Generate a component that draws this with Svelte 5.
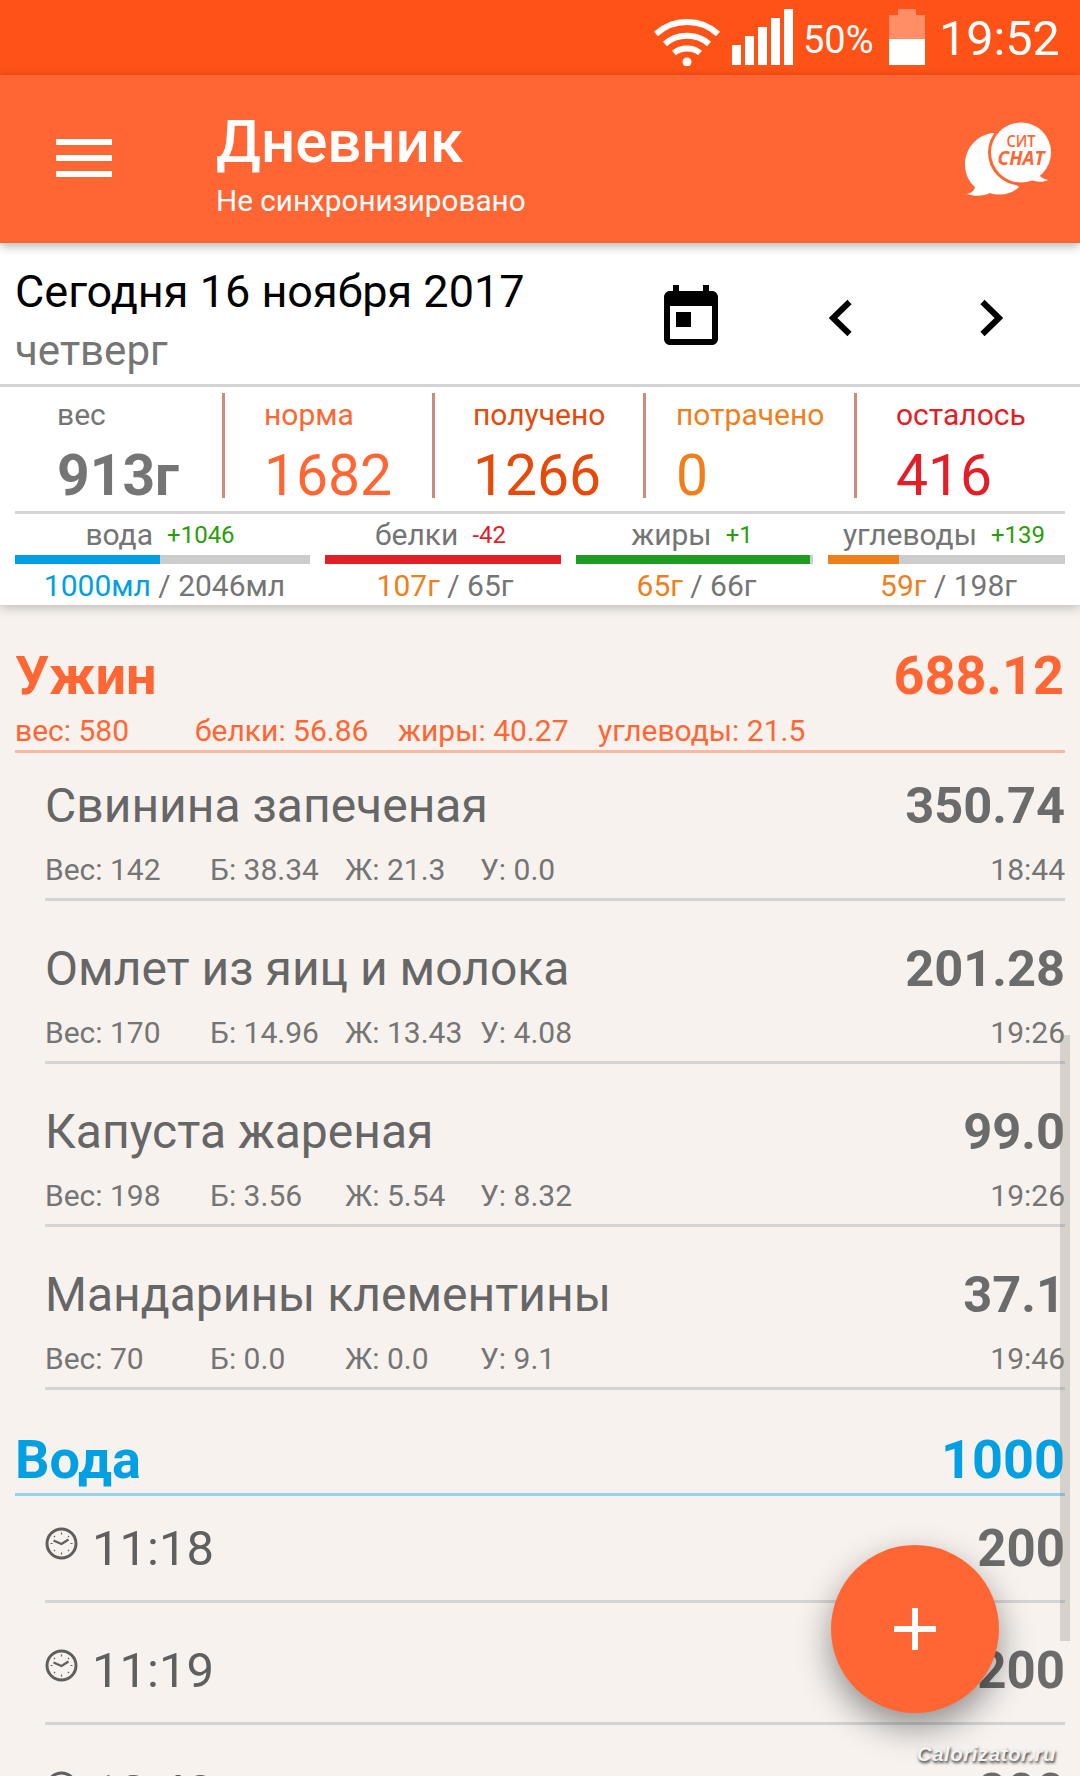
<script>
  const stats = [
    { label: 'вес', value: '913г', cls: 'gray bold', w: 225, pad: 57 },
    { label: 'норма', value: '1682', cls: 'c-norm', w: 210, pad: 39 },
    { label: 'получено', value: '1266', cls: 'c-got', w: 211, pad: 38 },
    { label: 'потрачено', value: '0', cls: 'c-spent', w: 211, pad: 30 },
    { label: 'осталось', value: '416', cls: 'c-left', w: 223, pad: 39 }
  ];
  const macros = [
    { name: 'вода', diff: '+1046', diffCls: 'plus', w: 295, pct: 49.2, color: '#009fe3', val: '1000мл', valCls: 'c-water', total: ' / 2046мл' },
    { name: 'белки', diff: '-42', diffCls: 'minus', w: 236, pct: 100, color: '#e31e24', val: '107г', valCls: 'c-spent', total: ' / 65г' },
    { name: 'жиры', diff: '+1', diffCls: 'plus', w: 237, pct: 98.7, color: '#1f9d23', val: '65г', valCls: 'c-spent', total: ' / 66г' },
    { name: 'углеводы', diff: '+139', diffCls: 'plus', w: 237, pct: 30, color: '#ef7f1a', val: '59г', valCls: 'c-spent', total: ' / 198г' }
  ];
  const foods = [
    { name: 'Свинина запеченая', kcal: '350.74', w: '142', p: '38.34', f: '21.3', c: '0.0', t: '18:44' },
    { name: 'Омлет из яиц и молока', kcal: '201.28', w: '170', p: '14.96', f: '13.43', c: '4.08', t: '19:26' },
    { name: 'Капуста жареная', kcal: '99.0', w: '198', p: '3.56', f: '5.54', c: '8.32', t: '19:26' },
    { name: 'Мандарины клементины', kcal: '37.1', w: '70', p: '0.0', f: '0.0', c: '9.1', t: '19:46' }
  ];
  const water = [
    { t: '11:18', v: '200' },
    { t: '11:19', v: '200' },
    { t: '12:48', v: '200' }
  ];
</script>

<div class="screen">
  <header class="status">
    <svg class="wifi" width="66" height="50" viewBox="0 0 66 50">
      <g fill="none" stroke="#fff" stroke-width="6">
        <path d="M2 18 C19 2 47 2 64 18" />
        <path d="M11 28 C23 17 43 17 55 28" />
        <path d="M20 37 C27 31 39 31 46 37" />
      </g>
      <circle cx="33" cy="46" r="4.5" fill="#fff" />
    </svg>
    <div class="signal">
      <i class="s1"></i><i class="s2"></i><i class="s3"></i><i class="s4"></i><i class="s5"></i>
    </div>
    <span class="pct">50%</span>
    <div class="battery"><i class="cap"></i><i class="empty"></i><i class="full"></i></div>
    <span class="clock">19:52</span>
  </header>

  <div class="appbar">
    <div class="burger"><i></i><i></i><i></i></div>
    <div class="titles">
      <div class="title">Дневник</div>
      <div class="sub">Не синхронизировано</div>
    </div>
    <svg class="chat" width="94" height="76" viewBox="0 0 94 76">
      <path fill="#fff" d="M33 11 C16 12 4 27 4 42 C4 52 8 60 14 65 C13 69 10 71 6 72 C14 75 23 74 29 71 C36 74 50 73 58 65 C44 55 34 50 33 11Z" />
      <circle cx="60" cy="30.5" r="33" fill="#ff6633" />
      <circle cx="60" cy="30.5" r="30" fill="#fff" />
      <path fill="#fff" d="M76 50 C78 54 82 57 87 58 C82 61 72 60 66 56Z" />
      <text x="60" y="25" class="chat-a" text-anchor="middle" textLength="29" lengthAdjust="spacingAndGlyphs">СИТ</text>
      <text x="60" y="43" class="chat-b" text-anchor="middle" textLength="47" lengthAdjust="spacingAndGlyphs">CHAT</text>
    </svg>
  </div>

  <section class="panel">
    <div class="date-row">
      <div class="date-text">
        <div class="date">Сегодня 16 ноября 2017</div>
        <div class="weekday">четверг</div>
      </div>
      <svg class="cal" width="72" height="72" viewBox="0 0 24 24">
        <path d="M19 3h-1V1h-2v2H8V1H6v2H5c-1.11 0-1.99.9-1.99 2L3 19c0 1.1.89 2 2 2h14c1.1 0 2-.9 2-2V5c0-1.1-.9-2-2-2zm0 16H5V8h14v11zM7 10h5v5H7z" />
      </svg>
      <svg class="chev-l" width="24" height="38" viewBox="0 0 24 38">
        <path d="M20.5 3 L4 19 L20.5 35" fill="none" stroke="#000" stroke-width="6" />
      </svg>
      <svg class="chev-r" width="24" height="38" viewBox="0 0 24 38">
        <path d="M3.5 3 L20 19 L3.5 35" fill="none" stroke="#000" stroke-width="6" />
      </svg>
    </div>

    <div class="stats">
      {#each stats as s, i}
        <div class="stat {s.cls}" class:first={i === 0} style="width:{s.w}px;padding-left:{s.pad}px">
          <div class="stat-label">{s.label}</div>
          <div class="stat-value">{s.value}</div>
        </div>
      {/each}
    </div>

    <div class="macros">
      {#each macros as m}
        <div class="macro" style="width:{m.w}px">
          <div class="macro-head"><span class="macro-name">{m.name}</span><span class="diff {m.diffCls}">{m.diff}</span></div>
          <div class="bar"><div class="fill" style="width:{m.pct}%;background:{m.color}"></div></div>
          <div class="macro-val"><span class={m.valCls}>{m.val}</span>{m.total}</div>
        </div>
      {/each}
    </div>
  </section>

  <main class="content">
    <div class="meal-head">
      <span>Ужин</span><span>688.12</span>
    </div>
    <div class="meal-meta">
      <span class="m1">вес: 580</span><span class="m2">белки: 56.86</span><span class="m3">жиры: 40.27</span><span>углеводы: 21.5</span>
    </div>

    {#each foods as f}
      <div class="food">
        <div class="food-top"><span class="food-name">{f.name}</span><span class="food-kcal">{f.kcal}</span></div>
        <div class="food-meta">
          <span class="c1">Вес: {f.w}</span><span class="c2">Б: {f.p}</span><span class="c3">Ж: {f.f}</span><span class="c4">У: {f.c}</span><span class="time">{f.t}</span>
        </div>
      </div>
    {/each}

    <div class="water-head"><span>Вода</span><span>1000</span></div>
    {#each water as w}
      <div class="water-row">
        <svg class="clock-ic" width="33" height="33" viewBox="0 0 33 33">
          <circle cx="16.5" cy="16.5" r="14.5" fill="none" stroke="#5f5f5f" stroke-width="3" />
          <path d="M16.5 5.5v2M16.5 25.5v2M5.5 16.5h2M25.5 16.5h2M9 9l1 1M24 9l-1 1M9 24l1-1M24 24l-1-1" stroke="#5f5f5f" stroke-width="1.2" />
          <path d="M8.5 13.5 L16.5 17 L23.5 12.5" fill="none" stroke="#5f5f5f" stroke-width="2.2" />
        </svg>
        <span class="water-time">{w.t}</span>
        <span class="water-val">{w.v}</span>
      </div>
    {/each}
  </main>

  <div class="scroll"></div>
  <button class="fab" aria-label="Добавить"><i class="h"></i><i class="v"></i></button>
  <div class="mark">Calorizator.ru</div>
</div>

<style>
  :global(body) { margin: 0; }
  * { box-sizing: border-box; }
  i { display: block; }
  .screen {
    position: relative;
    width: 1080px;
    height: 1776px;
    overflow: hidden;
    background: #f7f2ee;
    font-family: Roboto, "Noto Sans", sans-serif;
    color: #757575;
  }

  .status {
    height: 75px;
    background: #ff5216;
    display: flex;
    align-items: flex-start;
    color: #fff;
    padding-left: 654px;
  }
  .wifi { margin-top: 16px; }
  .signal { display: flex; align-items: flex-end; gap: 4px; height: 56px; margin: 9px 0 0 12px; }
  .signal i { width: 9px; background: #fff; }
  .s1 { height: 20px; }
  .s2 { height: 29px; }
  .s3 { height: 38px; }
  .s4 { height: 47px; }
  .s5 { height: 56px; }
  .pct { font-size: 38px; line-height: 44px; margin: 18px 0 0 10px; width: 86px; }
  .battery { width: 36px; margin-top: 9px; display: flex; flex-direction: column; align-items: center; }
  .cap { width: 18px; height: 6px; background: rgba(255,255,255,.35); }
  .empty { width: 36px; height: 24px; background: rgba(255,255,255,.35); }
  .full { width: 36px; height: 26px; background: #fff; }
  .clock { font-size: 48.5px; line-height: 56px; margin: 11px 0 0 14px; }

  .appbar {
    position: relative;
    z-index: 2;
    height: 168px;
    background: #ff6633;
    display: flex;
    align-items: flex-start;
    color: #fff;
    box-shadow: 0 3px 10px rgba(0,0,0,.3);
  }
  .burger { width: 56px; margin: 64px 0 0 56px; display: flex; flex-direction: column; gap: 10px; }
  .burger i { height: 6px; background: #fff; }
  .titles { margin-left: 104px; }
  .title { font-size: 60px; line-height: 70px; font-weight: 500; margin-top: 32px; }
  .sub { font-size: 29.7px; line-height: 36px; margin-top: 6px; }
  .chat { position: absolute; left: 961px; top: 47px; }
  .chat-a { font: 600 16px "Open Sans", Roboto, sans-serif; fill: #ff6633; }
  .chat-b { font: italic 700 20px "Open Sans", Roboto, sans-serif; fill: #ff6633; }

  .panel {
    position: relative;
    z-index: 1;
    background: #fff;
    box-shadow: 0 3px 10px rgba(0,0,0,.22);
    height: 362px;
  }
  .date-row {
    height: 141px;
    display: flex;
    align-items: flex-start;
    padding-left: 15px;
  }
  .date-text { width: 640px; }
  .date { font-size: 45px; line-height: 52px; color: #000; margin-top: 23px; }
  .weekday { font-size: 42px; line-height: 48px; color: #757575; margin-top: 9px; }
  .cal { margin-top: 39px; fill: #000; }
  .chev-l { margin: 56px 0 0 102px; }
  .chev-r { margin: 56px 0 0 126px; }

  .stats {
    height: 127px;
    border-top: 3px solid #d4d4d4;
    display: flex;
    position: relative;
    padding-top: 6px;
  }
  .stat { height: 105px; position: relative; }
  .stat:not(:last-child)::after {
    content: '';
    position: absolute;
    right: 0;
    top: 0;
    bottom: 0;
    width: 3px;
    background: #cd8b7c;
  }
  .stat-label { font-size: 30px; line-height: 36px; margin-top: 4px; }
  .stat-value { font-size: 57px; line-height: 64px; margin-top: 11px; }
  .bold .stat-value { font-weight: 700; }
  .gray { color: #757575; }
  .c-norm { color: #ff6633; }
  .c-got { color: #e64a0a; }
  .c-spent { color: #ef7f1a; }
  .c-left { color: #e31e26; }
  .c-water { color: #009fe3; }

  .macros {
    margin: 0 15px;
    border-top: 3px solid #d4d4d4;
    display: flex;
    gap: 15px;
  }
  .macro { text-align: center; }
  .macro-head { height: 41px; display: flex; justify-content: center; align-items: center; gap: 14px; padding-right: 5px; }
  .macro-name { font-size: 30px; line-height: 36px; }
  .diff { font-size: 24px; line-height: 32px; margin-top: 1px; }
  .plus { color: #2a9d0a; }
  .minus { color: #e31e26; }
  .bar { height: 9px; background: #ccc; }
  .fill { height: 100%; }
  .macro-val { font-size: 30px; line-height: 36px; margin-top: 4px; padding-left: 4px; white-space: pre; }

  .content { padding: 0 15px; position: relative; }
  .meal-head, .water-head {
    display: flex;
    justify-content: space-between;
    font-size: 54px;
    font-weight: 700;
    line-height: 64px;
  }
  .meal-head { color: #ff6633; margin-top: 39px; padding-right: 1px; }
  .meal-meta {
    display: flex;
    font-size: 30px;
    line-height: 36px;
    color: #ff6633;
    border-bottom: 3px solid #f9b9a0;
    height: 45px;
    padding-top: 5px;
    white-space: nowrap;
  }
  .m1 { width: 180px; }
  .m2 { width: 203px; }
  .m3 { width: 200px; }

  .food {
    margin: 16px 0 0 30px;
    height: 147px;
    border-bottom: 3px solid #d4d4d4;
  }
  .meal-meta + .food { margin-top: 1px; }
  .food-top { display: flex; justify-content: space-between; padding-top: 24px; }
  .food-name { font-size: 48px; line-height: 56px; color: #666; }
  .food-kcal { font-size: 50.6px; line-height: 56px; font-weight: 700; color: #6b6b6b; }
  .food-meta { display: flex; font-size: 30px; line-height: 36px; margin-top: 18px; color: #757575; white-space: nowrap; }
  .c1 { width: 165px; }
  .c2 { width: 135px; }
  .c3 { width: 135px; }
  .c4 { flex: 1; }

  .water-head { color: #00a0e3; margin-top: 38px; height: 68px; border-bottom: 3px solid #97d3ea; }
  .water-row {
    margin: 15px 0 0 30px;
    height: 107px;
    display: flex;
    align-items: flex-start;
    border-bottom: 3px solid #d4d4d4;
  }
  .water-head + .water-row { margin-top: 0; }
  .clock-ic { margin-top: 31px; }
  .water-time { font-size: 49px; line-height: 56px; margin: 25px 0 0 14px; color: #5f5f5f; flex: 1; }
  .water-val { font-size: 51px; line-height: 56px; margin-top: 25px; font-weight: 700; color: #6b6b6b; }

  .scroll {
    position: absolute;
    left: 1060px;
    top: 1035px;
    width: 10px;
    height: 606px;
    background: rgba(120,110,100,.25);
  }
  .fab {
    position: absolute;
    left: 831px;
    top: 1545px;
    width: 168px;
    height: 168px;
    border: 0;
    padding: 0;
    border-radius: 50%;
    background: #ff6633;
    box-shadow: 0 14px 34px rgba(0,0,0,.42);
  }
  .fab .h { position: absolute; left: 63px; top: 81px; width: 42px; height: 6px; background: #fff; }
  .fab .v { position: absolute; left: 81px; top: 63px; width: 6px; height: 42px; background: #fff; }
  .mark {
    position: absolute;
    right: 24px;
    top: 1742px;
    font: italic 700 20.5px "Liberation Sans", sans-serif;
    letter-spacing: .5px;
    color: #f2f2f2;
    text-shadow: 1px 2px 3px rgba(0,0,0,.8);
  }
</style>
